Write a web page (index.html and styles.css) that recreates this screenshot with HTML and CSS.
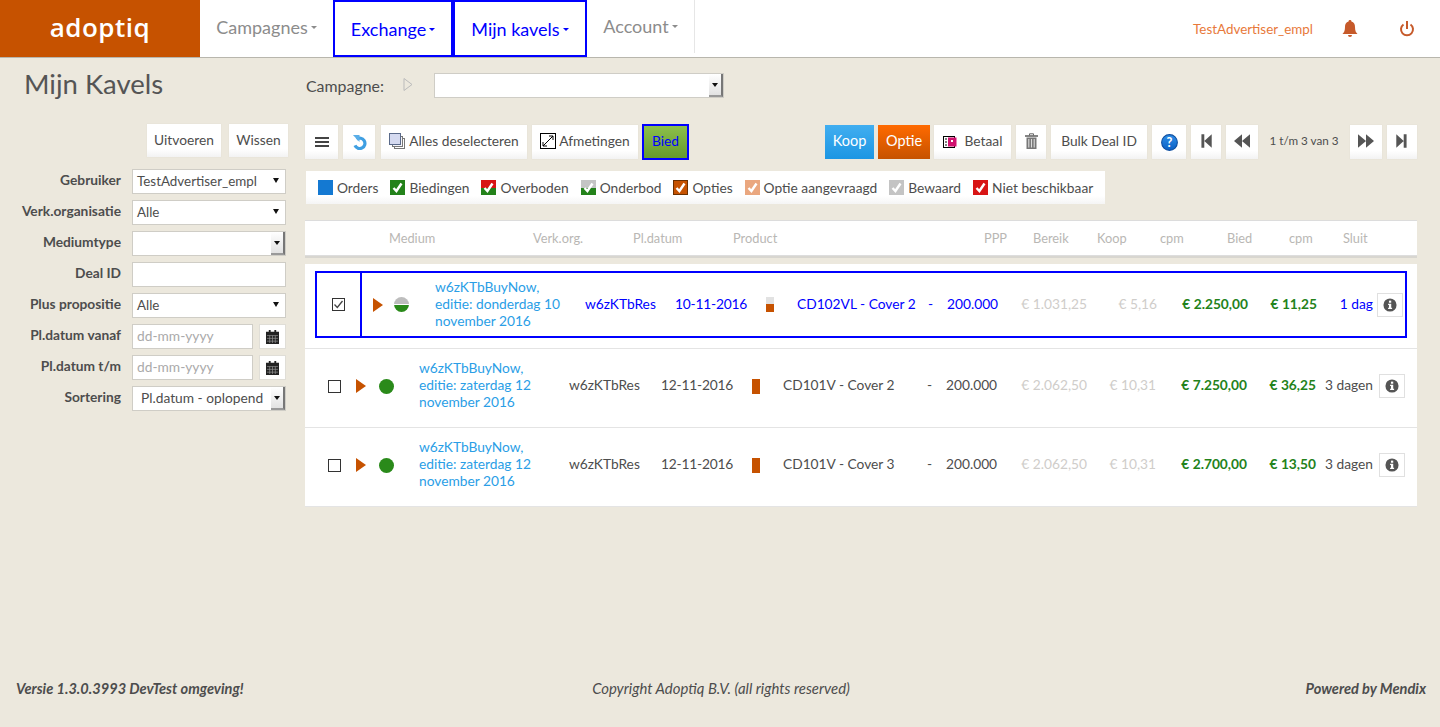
FILE: index.html
```html
<!DOCTYPE html>
<html lang="nl">
<head>
  <meta charset="UTF-8">
  <title>Mijn Kavels</title>
  <link rel="stylesheet" href="styles.css">
</head>
<body>

<svg class="defs" aria-hidden="true">
  <symbol id="tick" viewBox="0 0 15 15"><path d="M3.5 8 6.4 11 11.5 3.5" fill="none" stroke="#fff" stroke-width="2.4"/></symbol>
  <symbol id="info" viewBox="0 0 16 16"><circle cx="8" cy="8" r="7.5" fill="#555"/><rect x="6.8" y="3" width="2.6" height="2.4" fill="#fff"/><path d="M5.8 6.600h3.600v4.600h1v1.400H5.800v-1.400h1V8H5.800z" fill="#fff"/></symbol>
  <symbol id="cal" viewBox="0 0 14 16"><path d="M0 3h3V1h2v2h4V1h2v2h3v13H0z" fill="#222"/><path d="M1 7h12M1 10h12M1 13h12M4 7v8M7 7v8M10 7v8" stroke="#999" stroke-width=".7"/></symbol>
  <symbol id="play" viewBox="0 0 10 14"><path d="M0 0 10 7 0 14z" fill="#c65200"/></symbol>
  <linearGradient id="help-fill" x1="0" y1="0" x2="0" y2="1"><stop offset="0" stop-color="#2f8fe8"/><stop offset="1" stop-color="#0a5fc4"/></linearGradient>
</svg>

<nav class="navbar">
  <a class="logo">adoptiq</a>
  <a class="nav-item w-campagnes">Campagnes<i class="caret"></i></a>
  <a class="nav-item active w-exchange">Exchange<i class="caret"></i></a>
  <a class="nav-item active w-kavels">Mijn kavels<i class="caret"></i></a>
  <a class="nav-item w-account">Account<i class="caret"></i></a>
  <div class="nav-right">
    <span class="nav-user">TestAdvertiser_empl</span>
    <svg class="bell" viewBox="0 0 16 18"><path d="M8 0a1.400 1.400 0 0 1 1.400 1.600C12 2.300 13 4.500 13 7c0 4 1 5.500 2.500 7H.5C2 12.500 3 11 3 7c0-2.500 1-4.700 3.600-5.400A1.400 1.400 0 0 1 8 0zM6 15h4a2 2 0 0 1-4 0z" fill="#c65a2a"/></svg>
    <svg class="power" viewBox="0 0 16 18"><path d="M4.500 4.500a6 6 0 1 0 7 0" fill="none" stroke="#c65a2a" stroke-width="2"/><path d="M8 1v8" stroke="#c65a2a" stroke-width="2"/></svg>
  </div>
</nav>

<div class="page">
  <aside class="sidebar">
    <h1>Mijn Kavels</h1>
    <div class="side-actions">
      <button class="btn tall w-run">Uitvoeren</button>
      <button class="btn tall w-clear">Wissen</button>
    </div>
    <div class="filter">
      <label>Gebruiker</label>
      <div class="field select">TestAdvertiser_empl</div>
      <label>Verk.organisatie</label>
      <div class="field select">Alle</div>
      <label>Mediumtype</label>
      <div class="field combo"><b class="combo-btn"></b></div>
      <label>Deal ID</label>
      <div class="field"></div>
      <label>Plus propositie</label>
      <div class="field select">Alle</div>
      <label>Pl.datum vanaf</label>
      <div class="date-wrap">
        <div class="field hint">dd-mm-yyyy</div>
        <button class="cal-btn"><svg><use href="#cal"/></svg></button>
      </div>
      <label>Pl.datum t/m</label>
      <div class="date-wrap">
        <div class="field hint">dd-mm-yyyy</div>
        <button class="cal-btn"><svg><use href="#cal"/></svg></button>
      </div>
      <label>Sortering</label>
      <div class="field combo indent">Pl.datum - oplopend<b class="combo-btn"></b></div>
    </div>
  </aside>

  <main class="content">
    <div class="campaign">
      <span>Campagne:</span>
      <svg class="hollow" viewBox="0 0 10 14"><path d="M1 1 9 7 1 13z" fill="none" stroke="#bbb"/></svg>
      <div class="campaign-field"><b class="combo-btn"></b></div>
    </div>

    <div class="toolbar">
      <button class="btn w-menu"><svg class="ico" viewBox="0 0 14 10"><path d="M0 1h14M0 5h14M0 9h14" stroke="#444" stroke-width="2"/></svg></button>
      <button class="btn w-undo"><svg class="ico" viewBox="0 0 16 16"><path d="M5 4.500A5.500 5.500 0 1 1 3.200 11" fill="none" stroke="#3f9fe2" stroke-width="3.400"/><path d="M1 0h7v7.500z" fill="#5aaee8"/></svg></button>
      <button class="btn w-desel"><svg class="ico" viewBox="0 0 16 16"><rect x="5.500" y="5.500" width="10" height="10" fill="#fff" stroke="#777"/><rect x="3.500" y="3.500" width="10" height="10" fill="#f4f4fa" stroke="#777"/><rect x=".5" y=".5" width="11" height="11" fill="#d5daf0" stroke="#5a6a8a"/></svg>Alles deselecteren</button>
      <button class="btn w-size"><svg class="ico" viewBox="0 0 16 16"><rect x=".5" y=".5" width="15" height="15" fill="#fff" stroke="#000"/><path d="M3 13 13 3M9 3h4v4M3 9v4h4" fill="none" stroke="#000"/></svg>Afmetingen</button>
      <button class="btn-bied">Bied</button>
      <div class="toolbar-right">
        <button class="btn-koop">Koop</button>
        <button class="btn-optie">Optie</button>
        <button class="btn w-betaal"><svg class="ico" viewBox="0 0 14 14"><rect x=".5" y="1.500" width="11" height="11" fill="#fff" stroke="#000"/><path d="M2 4h2M2 7h2M2 10h2" stroke="#000"/><rect x="5" y="2.500" width="8.500" height="9" fill="#d1106e"/><rect x="8" y="5" width="2" height="2" fill="#fff"/></svg>Betaal</button>
        <button class="btn w-trash"><svg class="ico" viewBox="0 0 13 16"><path d="M0 3h13" stroke="#666" stroke-width="1.600"/><path d="M4.500 2.500V.8h4v1.700" fill="none" stroke="#666"/><path d="M1.500 4.500h10V16h-10z" fill="#777"/><path d="M3.800 6v8.500M6.500 6v8.500M9.200 6v8.500" stroke="#ddd" stroke-width="1.100"/></svg></button>
        <button class="btn w-bulk">Bulk Deal ID</button>
        <button class="btn w-help"><svg class="ico help" viewBox="0 0 16 16"><circle cx="8" cy="8" r="7.400" fill="url(#help-fill)" stroke="#0d4ea0"/><text x="8" y="12.200" class="help-q">?</text></svg></button>
        <button class="btn w-page"><svg class="ico" viewBox="0 0 12 14"><path d="M2 1h2.500v12H2zM11 1v12L4.500 7z" fill="#555"/></svg></button>
        <button class="btn w-page2"><svg class="ico" viewBox="0 0 14 14"><path d="M7 1v12L0 7zM14 1v12L7 7z" fill="#555"/></svg></button>
        <span class="pager">1 t/m 3 van 3</span>
        <button class="btn w-page2"><svg class="ico" viewBox="0 0 14 14"><path d="M0 1v12l7-6zM7 1v12l7-6z" fill="#555"/></svg></button>
        <button class="btn w-page"><svg class="ico" viewBox="0 0 12 14"><path d="M1 1v12l6.500-6zM7.500 1H10v12H7.500z" fill="#555"/></svg></button>
      </div>
    </div>

    <div class="legend">
      <span class="key"><i class="sq c-orders"></i>Orders</span>
      <span class="key"><i class="sq c-green"><svg><use href="#tick"/></svg></i>Biedingen</span>
      <span class="key"><i class="sq c-over"><svg><use href="#tick"/></svg></i>Overboden</span>
      <span class="key"><i class="sq c-under"><svg><use href="#tick"/></svg></i>Onderbod</span>
      <span class="key"><i class="sq c-optie"><svg><use href="#tick"/></svg></i>Opties</span>
      <span class="key"><i class="sq c-asked"><svg><use href="#tick"/></svg></i>Optie aangevraagd</span>
      <span class="key"><i class="sq c-saved"><svg><use href="#tick"/></svg></i>Bewaard</span>
      <span class="key"><i class="sq c-red"><svg><use href="#tick"/></svg></i>Niet beschikbaar</span>
    </div>

    <div class="list-head">
      <span class="h-medium">Medium</span>
      <span class="h-org">Verk.org.</span>
      <span class="h-date">Pl.datum</span>
      <span class="h-product">Product</span>
      <span class="h-ppp">PPP</span>
      <span class="h-reach">Bereik</span>
      <span class="h-koop">Koop</span>
      <span class="h-cpm">cpm</span>
      <span class="h-bied">Bied</span>
      <span class="h-cpm2">cpm</span>
      <span class="h-close">Sluit</span>
    </div>

    <div class="rows">
      <div class="row-wrap first">
        <div class="row selected">
          <div class="check-cell"><i class="check on"><svg viewBox="0 0 13 13"><path d="M2.500 6.500 5.300 9.500 10.500 3" fill="none" stroke="#444" stroke-width="1.300"/></svg></i></div>
          <svg class="arrow"><use href="#play"/></svg>
          <i class="dot half"></i>
          <a class="title">w6zKTbBuyNow, editie: donderdag 10 november 2016</a>
          <span>w6zKTbRes</span>
          <span class="date">10-11-2016</span>
          <i class="bar half"></i>
          <span>CD102VL - Cover 2</span>
          <span>-</span>
          <span class="num">200.000</span>
          <span class="num muted">€ 1.031,25</span>
          <span class="num muted">€ 5,16</span>
          <span class="num price">€ 2.250,00</span>
          <span class="num price">€ 11,25</span>
          <span class="num">1 dag</span>
          <button class="info-btn"><svg><use href="#info"/></svg></button>
        </div>
      </div>
      <div class="row plain">
        <div class="check-cell"><i class="check"></i></div>
        <svg class="arrow"><use href="#play"/></svg>
        <i class="dot"></i>
        <a class="title">w6zKTbBuyNow, editie: zaterdag 12 november 2016</a>
        <span>w6zKTbRes</span>
        <span class="date">12-11-2016</span>
        <i class="bar"></i>
        <span>CD101V - Cover 2</span>
        <span>-</span>
        <span class="num">200.000</span>
        <span class="num muted">€ 2.062,50</span>
        <span class="num muted">€ 10,31</span>
        <span class="num price">€ 7.250,00</span>
        <span class="num price">€ 36,25</span>
        <span class="num">3 dagen</span>
        <button class="info-btn"><svg><use href="#info"/></svg></button>
      </div>
      <div class="row plain">
        <div class="check-cell"><i class="check"></i></div>
        <svg class="arrow"><use href="#play"/></svg>
        <i class="dot"></i>
        <a class="title">w6zKTbBuyNow, editie: zaterdag 12 november 2016</a>
        <span>w6zKTbRes</span>
        <span class="date">12-11-2016</span>
        <i class="bar"></i>
        <span>CD101V - Cover 3</span>
        <span>-</span>
        <span class="num">200.000</span>
        <span class="num muted">€ 2.062,50</span>
        <span class="num muted">€ 10,31</span>
        <span class="num price">€ 2.700,00</span>
        <span class="num price">€ 13,50</span>
        <span class="num">3 dagen</span>
        <button class="info-btn"><svg><use href="#info"/></svg></button>
      </div>
    </div>
  </main>
</div>

<footer class="footer">
  <b>Versie 1.3.0.3993 DevTest omgeving!</b>
  <span>Copyright Adoptiq B.V. (all rights reserved)</span>
  <b>Powered by Mendix</b>
</footer>

</body>
</html>
```

FILE: styles.css
```css
* {
  box-sizing: border-box;
}
html, body {
  height: 100%;
}
body {
  margin: 0;
  display: flex;
  flex-direction: column;
  height: 727px;
  overflow: hidden;
  background: #ece8dd;
  color: #4d4d4d;
  font-family: Lato, "Open Sans", sans-serif;
  font-size: 13.75px;
}
.defs {
  position: absolute;
  width: 0;
  height: 0;
}
i {
  display: block;
}
button {
  font: inherit;
  color: inherit;
  border: 0;
  padding: 0;
}

/* top bar */
.navbar {
  display: flex;
  height: 58px;
  flex: none;
  background: #fff;
  border-bottom: 1px solid #b8b6ad;
}
.logo {
  width: 200px;
  background: #c65200;
  color: #fff;
  font-family: "Open Sans", sans-serif;
  font-weight: 600;
  font-size: 26px;
  letter-spacing: .5px;
  text-align: center;
  line-height: 54px;
}
.nav-item {
  display: flex;
  align-items: center;
  justify-content: center;
  font-size: 18px;
  color: #8c8c8c;
  padding-bottom: 4px;
}
.nav-item.active {
  color: #0000ff;
  border: 2px solid #0000ff;
  padding-bottom: 0;
  height: 57px;
}
.w-campagnes { width: 133px; }
.w-exchange { width: 120px; }
.w-kavels { width: 134px; }
.w-account {
  width: 108px;
  border-right: 1px solid #e6e6e6;
  height: 53px;
  padding-bottom: 2px;
}
.caret {
  margin-left: 3px;
  margin-top: 2px;
  border: 3.5px solid transparent;
  border-top-color: currentColor;
  border-bottom: 0;
}
.nav-right {
  margin-left: auto;
  display: flex;
  align-items: center;
}
.nav-user {
  color: #e8793a;
  font-size: 13.4px;
  margin-right: 29px;
}
.bell {
  width: 16px;
  height: 18px;
  margin-right: 41px;
}
.power {
  width: 16px;
  height: 18px;
  margin-right: 25px;
}

/* layout */
.page {
  flex: 1;
  display: flex;
}
.sidebar {
  width: 305px;
  flex: none;
  padding: 0 17px 0 0;
}
.sidebar h1 {
  margin: 9px 0 0 24px;
  font-size: 27.5px;
  font-weight: 400;
  line-height: 34px;
  color: #555;
}
.side-actions {
  display: flex;
  justify-content: flex-end;
  gap: 8px;
  margin-top: 23px;
}
.btn {
  display: inline-flex;
  align-items: center;
  justify-content: center;
  height: 34px;
  padding-bottom: 3px;
  background: linear-gradient(#fff 75%, #f3f3f3);
  box-shadow: 0 0 1px #d8d6cf;
  white-space: nowrap;
}
.btn.tall {
  height: 33px;
}
.w-run { width: 74px; }
.w-clear { width: 59px; }
.filter {
  display: grid;
  grid-template-columns: 121px 154px;
  column-gap: 11px;
  row-gap: 6px;
  margin-top: 12px;
  align-items: center;
}
.filter label {
  font-weight: 700;
  text-align: right;
  white-space: nowrap;
  padding-bottom: 4px;
}
.field {
  position: relative;
  height: 25px;
  line-height: 21px;
  padding-left: 4px;
  background: #fff;
  border: 1px solid #cfcdc6;
  white-space: nowrap;
}
.field.select {
  font-size: 13.4px;
  line-height: 22px;
}
.select::after {
  content: "";
  position: absolute;
  right: 6px;
  top: 8px;
  border: 3.5px solid transparent;
  border-top: 5px solid #111;
  border-bottom: 0;
}
.indent {
  padding-left: 8px;
}
.combo-btn {
  position: absolute;
  right: 0;
  top: 0;
  bottom: 0;
  width: 14px;
  background: linear-gradient(#fff, #e2e2e2);
  border-right: 2px solid #777;
  border-bottom: 2px solid #999;
}
.combo-btn::after {
  content: "";
  position: absolute;
  left: 3px;
  top: 9px;
  border: 3px solid transparent;
  border-top: 4px solid #111;
  border-bottom: 0;
}
.date-wrap {
  display: flex;
  justify-content: space-between;
}
.date-wrap .field {
  width: 121px;
}
.hint {
  color: #aaa;
}
.cal-btn {
  width: 27px;
  height: 25px;
  display: flex;
  align-items: center;
  justify-content: center;
  background: #fff;
  border: 1px solid #e0ded7;
}
.cal-btn svg {
  width: 13px;
  height: 15px;
}

/* main column */
.content {
  width: 1112px;
  flex: none;
}
.campaign {
  display: flex;
  align-items: center;
  height: 25px;
  margin: 15px 0 0 1px;
  font-size: 15.9px;
}
.hollow {
  width: 10px;
  height: 15px;
  margin: 0 21px 3px 19px;
}
.campaign-field {
  position: relative;
  width: 290px;
  height: 25px;
  background: #fff;
  border: 1px solid #cfcdc6;
}
.toolbar {
  display: flex;
  align-items: center;
  height: 36px;
  margin-top: 26px;
}
.toolbar > .btn {
  margin-right: 5px;
}
.ico {
  width: 16px;
  height: 16px;
  margin-right: 3px;
}
.ico.help {
  width: 17px;
  height: 17px;
  margin: 3px 0 0;
}
.help-q {
  fill: #fff;
  font-size: 12px;
  font-weight: 700;
  text-anchor: middle;
}
.w-menu { width: 33px; }
.w-menu .ico {
  width: 14px;
  height: 10px;
  margin: 2px 0 0;
}
.w-undo .ico {
  width: 15px;
  height: 15px;
  margin: 3px 0 0 1px;
}
.w-trash .ico {
  width: 13px;
  height: 16px;
  margin: 0;
}
.w-page .ico, .w-page2 .ico {
  margin: 0;
}
.toolbar > .w-undo {
  width: 32px;
  margin-right: 6px;
}
.w-desel { width: 146px; }
.w-desel .ico { margin-right: 4px; }
.w-size { width: 106px; }
.btn-bied {
  width: 47px;
  height: 36px;
  padding-bottom: 3px;
  background: linear-gradient(#8cc04a, #66992e);
  border: 2px solid #0000ff;
  color: #0000ff;
  margin-left: -1px;
}
.toolbar-right {
  margin-left: auto;
  display: flex;
  align-items: center;
  gap: 5px;
}
.btn-koop, .btn-optie {
  height: 34px;
  padding-bottom: 3px;
  color: #fff;
  font-size: 14.5px;
  margin-right: -1px;
}
.btn-koop {
  width: 49px;
  background: linear-gradient(#41aef0, #1c96e3);
}
.btn-optie {
  width: 52px;
  background: linear-gradient(#ff6a00, #c65200);
}
.w-betaal { width: 77px; }
.w-betaal .ico {
  width: 14px;
  height: 14px;
  margin: 2px 8px 0 0;
}
.w-trash { width: 30px; }
.w-bulk { width: 96px; }
.w-help { width: 34px; }
.w-page { width: 30px; }
.w-page2 { width: 32px; }
.pager {
  width: 82px;
  padding-bottom: 4px;
  text-align: center;
  font-size: 11.7px;
}
.legend {
  display: flex;
  align-items: center;
  gap: 12px;
  width: 799px;
  height: 33px;
  margin: 11px 0 0 1px;
  padding-left: 12px;
  background: linear-gradient(#fff 75%, #f5f5f5);
}
.key {
  display: flex;
  align-items: center;
  gap: 4px;
  white-space: nowrap;
}
.sq {
  width: 15px;
  height: 15px;
}
.sq svg {
  display: block;
  width: 15px;
  height: 15px;
}
.c-optie svg {
  margin: -1px;
}
.c-orders { background: #1479d2; }
.c-green { background: #23821a; }
.c-over { background: linear-gradient(#d81515 50%, #23821a 50%); }
.c-under { background: linear-gradient(#c4c4c4 50%, #23821a 50%); }
.c-optie { background: #c65200; border: 1px solid #6b3000; }
.c-asked { background: #eaa77f; }
.c-saved { background: #c4c4c4; }
.c-red { background: #d81515; }

.list-head {
  position: relative;
  height: 36px;
  margin-top: 16px;
  background: #fff;
  border-top: 1px solid #dcdcdc;
  border-bottom: 1px solid #ddd;
  box-shadow: 0 2px 0 #d8d6d0;
  color: #b9b7b4;
  font-size: 12.8px;
  line-height: 34px;
}
.list-head span {
  position: absolute;
  top: 0;
}
.h-medium { left: 84px; }
.h-org { left: 228px; }
.h-date { left: 328px; }
.h-product { left: 428px; }
.h-ppp { left: 679px; }
.h-reach { left: 728px; }
.h-koop { left: 792px; }
.h-cpm { left: 855px; }
.h-bied { left: 922px; }
.h-cpm2 { left: 984px; }
.h-close { left: 1038px; }

.rows {
  margin-top: 8px;
  background: #fff;
}
.row-wrap.first {
  height: 85px;
  padding: 7px 10px 0;
  border-bottom: 1px solid #e4e4e4;
}
.row {
  display: grid;
  align-items: center;
}
.row > span {
  white-space: nowrap;
}
.row > .date {
  letter-spacing: -.2px;
}
.selected {
  height: 67px;
  border: 2px solid #0000ff;
  color: #0000ff;
  grid-template-columns: 45px 32px 41px 150px 90px 91px 31px 131px 19px 50px 90px 70px 91px 69px 56px 30px;
}
.selected > span, .selected .title {
  margin-bottom: 2px;
}
.plain {
  height: 79px;
  padding-bottom: 4px;
  border-bottom: 1px solid #e4e4e4;
  grid-template-columns: 51px 23px 40px 150px 92px 91px 31px 144px 19px 51px 90px 69px 91px 69px 57px 32px;
}
.plain > span, .plain .title {
  margin-bottom: 4px;
}
.plain .info-btn {
  margin-left: 6px;
}
.selected .check-cell {
  border-right: 2px solid #0000ff;
  height: 100%;
}
.check-cell {
  display: flex;
  align-items: center;
  justify-content: center;
}
.plain .check-cell {
  padding-left: 23px;
  justify-content: flex-start;
}
.check {
  width: 13px;
  height: 13px;
  border: 1px solid #333;
}
.check svg {
  display: block;
  margin: -1px;
  width: 13px;
  height: 13px;
}
.arrow {
  width: 10px;
  height: 14px;
}
.selected .arrow {
  margin-left: 11px;
}
.dot {
  width: 15px;
  height: 15px;
  border-radius: 50%;
  background: #2a8a1a;
}
.dot.half {
  background: linear-gradient(#bdbdbd 48%, #fff 48%, #fff 56%, #2a8a1a 56%);
}
.title {
  color: #2a9ee6;
  line-height: 17px;
  width: 130px;
}
.bar {
  width: 8px;
  height: 15px;
  background: #c65200;
}
.bar.half {
  background: linear-gradient(#e2e2e2 50%, #c65200 50%);
}
.num {
  text-align: right;
}
.muted {
  color: #cfcdca;
}
.price {
  color: #23821a;
  font-weight: 700;
}
.info-btn {
  width: 26px;
  height: 24px;
  display: flex;
  align-items: center;
  justify-content: center;
  background: #fff;
  border: 1px solid #e0e0e0;
  margin-left: 4px;
}
.info-btn svg {
  width: 14px;
  height: 14px;
}

.footer {
  flex: none;
  display: grid;
  grid-template-columns: 1fr auto 1fr;
  align-items: center;
  height: 78px;
  padding: 0 14px 0 16px;
  font-size: 14.6px;
  font-style: italic;
}
.footer span {
  font-size: 14.9px;
}
.footer b:last-child {
  text-align: right;
}
```
